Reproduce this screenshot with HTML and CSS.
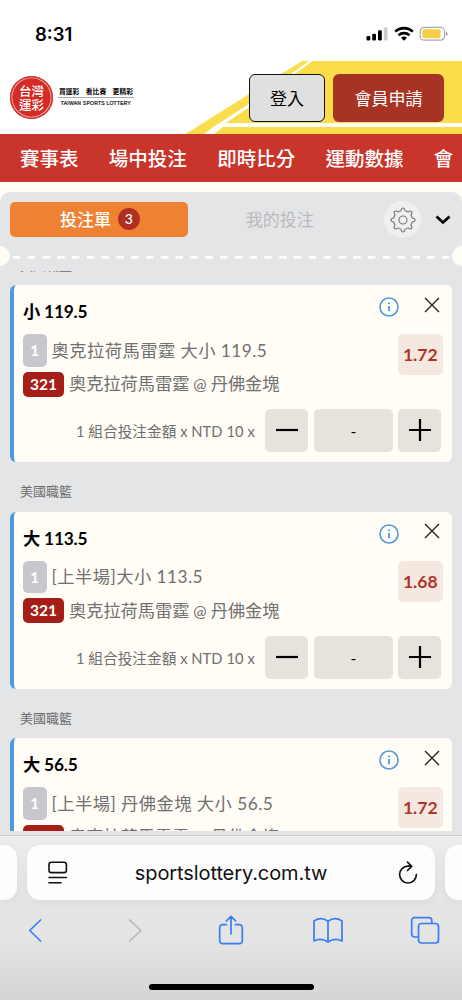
FILE: index.html
```
<!DOCTYPE html>
<html lang="zh-Hant">
<head>
<meta charset="utf-8">
<title>台灣運彩</title>
<link rel="stylesheet" href="styles.css">
</head>
<body>
<svg class="defs" width="0" height="0">
  <symbol id="info" viewBox="0 0 20 20"><circle cx="10" cy="10" r="9" fill="none" stroke="#5099db" stroke-width="1.6"/><path d="M10 9v5.200" stroke="#5099db" stroke-width="1.8"/><circle cx="10" cy="6.2" r="1" fill="#5099db"/></symbol>
  <symbol id="close" viewBox="0 0 16 16"><path d="M1 1l14 14M15 1L1 15" stroke="#222" stroke-width="1.4" fill="none"/></symbol>
  <symbol id="minus" viewBox="0 0 22 22"><path d="M0 11h22" stroke="#000" stroke-width="2.2"/></symbol>
  <symbol id="plus" viewBox="0 0 22 22"><path d="M0 11h22M11 0v22" stroke="#000" stroke-width="2.2"/></symbol>
</svg>
<div class="phone">
  <div class="status">
    <span class="clock">8:31</span>
    <svg width="84" height="18" viewBox="0 0 84 18">
      <rect x="0.5" y="10" width="3.8" height="4.4" rx="1.2"/><rect x="6.2" y="7.7" width="3.8" height="6.7" rx="1.2"/><rect x="12" y="4.3" width="3.8" height="10.1" rx="1.2"/><rect x="17.8" y="1.2" width="3.8" height="13.2" rx="1.2" fill="#ccc"/>
      <g fill="none" stroke="#000" stroke-width="2.7"><path d="M29.2 5.6a13 13 0 0 1 17.6 0"/><path d="M32.5 9.2a8.2 8.2 0 0 1 11 0"/></g>
      <path d="M35 11.8a4.6 4.6 0 0 1 6 0l-3 3z"/>
      <rect x="54.2" y="1.4" width="24.4" height="12.8" rx="4" fill="none" stroke="#aaa" stroke-width="1.2"/><rect x="56.3" y="3.3" width="18.2" height="9" rx="2" fill="#f6cd46"/><path d="M80 5.4q3.2 2.4 0 4.8z" fill="#999"/>
    </svg>
  </div>
  <header class="header">
    <svg class="art" width="462" height="73" viewBox="0 0 462 73">
      <path d="M185.500 73L302 0H462V73z" fill="#fadd4a"/>
      <path d="M204 73L219 62H462V66H223L214 73z" fill="#fff"/>
      <path d="M212 67L231 54.500L248 43.500L309 0H312.500L248 47L231 58.500L223 64z" fill="#fff"/>
    </svg>
    <div class="brand">
      <div class="seal"><span>台灣</span><span>運彩</span></div>
      <div class="slogan"><p class="zh"><span>買運彩</span><span>看比賽</span><span>更精彩</span></p><p class="en">TAIWAN SPORTS LOTTERY</p></div>
    </div>
    <div class="login">登入</div>
    <div class="signup">會員申請</div>
  </header>
  <nav class="nav"><span>賽事表</span><span>場中投注</span><span>即時比分</span><span>運動數據</span><span>會</span></nav>
  <main class="panel">
    <div class="tabs">
      <div class="tab on">投注單<b>3</b></div>
      <div class="tab">我的投注</div>
      <div class="gear"><svg width="26" height="26" viewBox="-13 -13 26 26" fill="none" stroke="#777" stroke-width="1.1" stroke-linejoin="round"><circle r="4"/><path d="M-2 -9.200Q-1.700 -12 0 -12T2 -9.200Q3.300 -8.800 5.100 -7.900Q7.300 -9.700 8.500 -8.500T7.900 -5.100Q8.800 -3.700 9.200 -2Q12 -1.700 12 0T9.200 2Q8.800 3.700 7.900 5.100Q9.700 7.300 8.500 8.500T5.100 7.900Q3.700 8.800 2 9.200Q1.700 12 0 12T-2 9.200Q-3.700 8.800 -5.100 7.900Q-7.300 9.700 -8.500 8.500T-7.900 5.100Q-8.800 3.700 -9.200 2Q-12 1.700 -12 0T-9.200 -2Q-8.800 -3.700 -7.900 -5.100Q-9.700 -7.300 -8.500 -8.500T-5.100 -7.900Q-3.700 -8.800 -2 -9.200z"/></svg></div>
      <svg class="chev" width="16" height="10" viewBox="0 0 16 10"><path d="M1.500 1.500L8 7.500L14.500 1.500" fill="none" stroke="#000" stroke-width="2.700"/></svg>
    </div>
    <svg class="perf" width="462" height="20" viewBox="0 0 462 20"><circle cx="0" cy="10" r="10" fill="#fffdf5"/><circle cx="462" cy="10" r="10" fill="#fffdf5"/><path d="M12.800 11.300H450" stroke="#fffdf5" stroke-width="2.800" stroke-dasharray="7.500 7.300"/></svg>
    <div class="list">
      <div class="league first">美國職籃</div>
      <article class="card">
        <div class="top"><h2>小 119.5</h2><svg class="info"><use href="#info"/></svg><svg class="close"><use href="#close"/></svg></div>
        <div class="body"><div class="lines">
          <p class="market"><i>1</i><span>奧克拉荷馬雷霆 大小 119.5</span></p>
          <p class="match"><i>321</i><span>奧克拉荷馬雷霆<em>@</em>丹佛金塊</span></p></div>
          <div class="odds">1.72</div></div>
        <div class="stake"><span>1 組合投注金額 x <u>NTD 10 x</u></span><div class="btn"><svg><use href="#minus"/></svg></div><div class="amount">-</div><div class="btn"><svg><use href="#plus"/></svg></div></div>
      </article>
      <div class="league">美國職籃</div>
      <article class="card">
        <div class="top"><h2>大 113.5</h2><svg class="info"><use href="#info"/></svg><svg class="close"><use href="#close"/></svg></div>
        <div class="body"><div class="lines">
          <p class="market"><i>1</i><span>[上半場]大小 113.5</span></p>
          <p class="match"><i>321</i><span>奧克拉荷馬雷霆<em>@</em>丹佛金塊</span></p></div>
          <div class="odds">1.68</div></div>
        <div class="stake"><span>1 組合投注金額 x <u>NTD 10 x</u></span><div class="btn"><svg><use href="#minus"/></svg></div><div class="amount">-</div><div class="btn"><svg><use href="#plus"/></svg></div></div>
      </article>
      <div class="league">美國職籃</div>
      <article class="card">
        <div class="top"><h2>大 56.5</h2><svg class="info"><use href="#info"/></svg><svg class="close"><use href="#close"/></svg></div>
        <div class="body"><div class="lines">
          <p class="market"><i>1</i><span>[上半場] 丹佛金塊 大小 56.5</span></p>
          <p class="match"><i>321</i><span>奧克拉荷馬雷霆<em>@</em>丹佛金塊</span></p></div>
          <div class="odds">1.72</div></div>
      </article>
    </div>
  </main>
  <footer class="browser">
    <div class="addresses">
      <div class="side left"></div>
      <div class="address">
        <svg width="20" height="24" viewBox="0 0 20 24" fill="none" stroke="#111" stroke-width="1.600" stroke-linecap="round"><rect x="1" y="1.200" width="17.400" height="10.400" rx="2.400"/><path d="M1 16.500h17.400M1 21.800h12"/></svg>
        <span>sportslottery.com.tw</span>
        <svg width="20" height="24" viewBox="0 0 20 24" fill="none" stroke="#111" stroke-width="1.700" stroke-linecap="round" stroke-linejoin="round"><path d="M13 5.200H10A8.400 8.400 0 1 0 18.400 13.600M9.500 1.200L13.700 5.300L9.500 9.500"/></svg>
      </div>
      <div class="side right"></div>
    </div>
    <div class="tools">
      <svg width="30" height="30" viewBox="0 0 30 30"><path d="M19.600 5L8.700 15.500L19.600 26"/></svg>
      <svg class="off" width="30" height="30" viewBox="0 0 30 30"><path d="M11.600 5L22.900 15.500L11.600 26"/></svg>
      <svg width="30" height="30" viewBox="0 0 30 30"><path d="M10.500 9.700H6.500a2.800 2.800 0 0 0-2.800 2.800v13.300a2.800 2.800 0 0 0 2.800 2.800h17a2.800 2.800 0 0 0 2.800-2.800V12.500a2.800 2.800 0 0 0-2.800-2.800h-4M15 19V1.300M10.300 6L15 1.300L19.700 6"/></svg>
      <svg width="30" height="30" viewBox="0 0 30 30"><path d="M15 6.200Q8 1.300 1 6V26Q8 22.500 15 27Q22 22.500 29 26V6Q22 1.300 15 6.200V27"/></svg>
      <svg width="30" height="30" viewBox="0 0 30 30"><rect x="8.500" y="8.500" width="20" height="19.500" rx="3"/><path d="M8 22H4.500a2.800 2.800 0 0 1-2.800-2.800V5.500a2.800 2.800 0 0 1 2.800-2.800h14.500a2.800 2.800 0 0 1 2.800 2.800V8"/></svg>
    </div>
    <div class="home"></div>
  </footer>
</div>
</body>
</html>
```
FILE: styles.css
```
* { box-sizing: border-box; margin: 0; padding: 0; }
body { background: #fff; font-family: Lato, "Noto Sans CJK TC", sans-serif; }
.defs { position: absolute; }
svg { display: block; flex: none; }
.phone { width: 462px; height: 1000px; overflow: hidden; display: flex; flex-direction: column; background: #fffdf5; white-space: nowrap; }
.status { height: 61px; flex: none; background: #fff; display: flex; justify-content: space-between; padding: 22px 12px 0 35px; }
.status svg { margin-top: 4px; }
.clock { font: 600 18.5px/24px Inter, sans-serif; letter-spacing: 0; }
.header { position: relative; height: 73px; flex: none; background: #fff; display: flex; padding: 13px 18px 0 10px; }
.art { position: absolute; left: 0; top: 0; }
.brand, .login, .signup { position: relative; }
.brand { display: flex; width: 239px; gap: 6px; }
.seal { width: 43px; height: 43px; margin-top: 2px; border-radius: 50%; background: #d52b27; box-shadow: inset 0 0 0 1.5px #d52b27, inset 0 0 0 2.3px #f4b9b5; color: #fff; display: flex; flex-direction: column; align-items: center; justify-content: center; font: 500 12.5px/13.5px "Noto Sans CJK TC", sans-serif; }
.slogan { width: 76px; margin-top: 12px; margin-left: -1px; }
.slogan .zh { display: flex; justify-content: space-between; font: 700 6.800px/10px "Noto Sans CJK TC", sans-serif; padding: 0 1px; border-bottom: 1px solid #aaa; height: 12px; }
.slogan .en { font: 400 5px/8px "Liberation Sans", sans-serif; -webkit-text-stroke: .2px #222; text-align: center; padding-top: 1px; letter-spacing: .25px; }
.login, .signup { height: 48px; border-radius: 6px; display: flex; align-items: center; justify-content: center; font-size: 17px; padding-bottom: 2px; }
.login { width: 76px; background: #e0e0e0; border: 1px solid #111; }
.signup { width: 111px; margin-left: 8px; background: #a73325; color: #fff; }
.nav { height: 48px; flex: none; background: #c9342b; color: #fff; display: flex; gap: 30.3px; padding-left: 20px; font: 500 19.5px/47px "Noto Sans CJK TC", sans-serif; overflow: hidden; }
.panel { margin-top: 10px; height: 643px; flex: none; background: #e4e5e7; border-radius: 10px 10px 0 0; display: flex; flex-direction: column; }
.tabs { height: 54px; padding: 10px 11px 0 10px; display: flex; align-items: flex-start; }
.tab { height: 34.500px; width: 180px; display: flex; align-items: center; justify-content: center; font-size: 17px; color: #b9babc; padding-bottom: 2px; }
.tab.on { width: 178px; background: #ee8232; color: #fff; border-radius: 5px; font-weight: 500; gap: 7px; padding: 0 0 1px 2px; }
.tab b { width: 22px; height: 22px; border-radius: 50%; background: #b12e22; font-size: 14px; line-height: 22px; font-weight: 500; text-align: center; }
.tab:nth-child(2) { width: 184px; }
.gear { width: 37px; height: 37px; border-radius: 50%; background: #f0f0f0; margin: -1px 0 0 12.500px; display: flex; align-items: center; justify-content: center; }
.chev { margin: 13px 0 0 14px; }
.perf { height: 20px; margin-bottom: 5px; }
.list { height: 560px; overflow: hidden; }
.league { height: 49.300px; padding: 20px 0 0 20px; font-size: 13px; line-height: 19px; color: #6c6c6e; }
.league.first { margin-top: -35.200px; }
.card { margin: 0 10px; height: 177.300px; background: #fffdf5; border-left: 4px solid #4f9adb; border-radius: 6px; padding: 0 10px 0 9px; }
.top { height: 49px; display: flex; }
.top h2 { flex: 1; font-size: 17.300px; line-height: 24px; padding-top: 15px; font-weight: 700; letter-spacing: -.2px; }
.info { width: 20px; height: 20px; margin-top: 12px; }
.close { width: 16px; height: 16px; margin: 11.500px 2.500px 0 24.200px; }
.body { display: flex; justify-content: space-between; height: 75px; }
.body p { display: flex; align-items: center; color: #707070; }
.body i { font-style: normal; color: #fff; font-weight: 700; border-radius: 5px; text-align: center; }
.market { height: 32.500px; gap: 5px; font-size: 17.300px; letter-spacing: .45px; }
.market i { width: 23.500px; height: 32.500px; line-height: 32px; background: #c8c7cd; font-size: 15px; }
.market span { position: relative; top: -1px; }
.match { height: 25px; margin-top: 5px; gap: 5px; font-size: 17.200px; }
.match i { width: 41px; height: 25px; line-height: 25px; background: #a61f17; font-size: 15.500px; }
.match span { line-height: 24px; }
.match em { font-style: normal; margin: 0 4px; font-size: 16px; }
.odds { width: 44.500px; height: 41px; border-radius: 5px; background: #f5e8e0; color: #b03427; font-size: 17.500px; font-weight: 700; line-height: 42px; text-align: center; margin-right: -.5px; }
.stake { display: flex; justify-content: flex-end; padding-right: 1px; }
.stake span { color: #707070; font-size: 14.700px; line-height: 44px; margin-right: 10px; }
.stake u { text-decoration: none; letter-spacing: .1px; }
.btn, .amount { height: 43px; border-radius: 5px; background: #e6e2dc; display: flex; align-items: center; justify-content: center; }
.btn { width: 43px; padding-bottom: 1px; }
.btn svg { width: 22px; height: 22px; }
.amount { width: 79px; margin: 0 5px 0 6px; font-size: 16px; }
.browser { height: 165px; flex: none; border-top: 1px solid #cacacc; background: linear-gradient(#ededee 0, #e4e4e5 45%, #e5e5e5 60%, #d5d5d5 100%); display: flex; flex-direction: column; }
.addresses { display: flex; justify-content: space-between; padding-top: 9px; }
.side, .address { height: 55px; background: #fdfdfd; box-shadow: 0 2px 10px rgba(0,0,0,.05); }
.side { width: 17px; }
.left { border-radius: 0 13px 13px 0; }
.right { border-radius: 13px 0 0 13px; }
.address { width: 408px; border-radius: 13px; display: flex; align-items: center; justify-content: space-between; padding: 0 17px 0 21px; font: 400 20px Inter, sans-serif; letter-spacing: -.1px; color: #111; }
.address span { position: relative; left: -2px; }
.tools { display: flex; justify-content: space-between; padding: 15px 22px 0 21px; }
.tools svg { fill: none; stroke: #397df6; stroke-width: 1.700; stroke-linecap: round; stroke-linejoin: round; }
.tools .off { stroke: #b7b7b8; }
.home { width: 165px; height: 6px; border-radius: 3px; background: #000; margin: 39px auto 0 149px; }
```
